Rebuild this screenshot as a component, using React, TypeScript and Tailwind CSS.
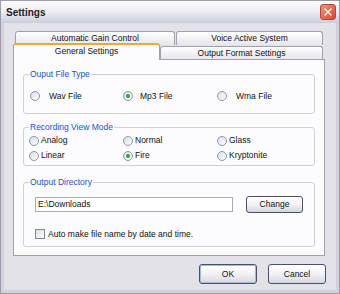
import { X } from "lucide-react";

const font = "font-['Liberation_Sans',Arial,sans-serif]";

function Radio({ label, checked, gap }: { label: string; checked?: boolean; gap: string }) {
  return (
    <label className={`flex items-center ${gap}`}>
      <span className="flex h-[10px] w-[10px] items-center justify-center rounded-full border border-[#8a96aa] bg-gradient-to-br from-[#dcdce4] to-white">
        {checked && <span className="h-[4px] w-[4px] rounded-full bg-[#2aa52a]" />}
      </span>
      <span>{label}</span>
    </label>
  );
}

function Group({ title, className, children }: { title: string; className: string; children: React.ReactNode }) {
  return (
    <div className={`relative mx-[9px] rounded-[3px] border border-[#cfd0d8] ${className}`}>
      <span className="absolute -top-[6px] left-[5px] bg-[#fcfcfe] px-[1px] leading-[10px] text-[#2450c8]">
        {title}
      </span>
      {children}
    </div>
  );
}

function Button({ children, primary, className }: { children: React.ReactNode; primary?: boolean; className: string }) {
  return (
    <button
      className={`rounded-[3px] border border-[#4a5068] bg-gradient-to-b from-white via-[#f2f2f6] to-[#d6d6e0] text-[#111] ${
        primary ? "shadow-[inset_0_0_0_1px_#aab8d8]" : ""
      } ${className}`}
    >
      {children}
    </button>
  );
}

export default function App() {
  return (
    <div className={`flex h-[294px] w-[340px] flex-col border border-[#9a9aa8] bg-[#d2d2dc] text-[8.5px] text-[#111] ${font}`}>
      {/* title bar */}
      <div className="flex h-[22px] items-center justify-between bg-gradient-to-b from-[#fdfdfe] via-[#ececf2] to-[#cdcdda] pl-[5px] pr-[3px]">
        <span className="text-[10px] font-bold text-[#222]">Settings</span>
        <span className="flex h-[16px] w-[16px] items-center justify-center rounded-[3px] border border-[#b04a3a] bg-gradient-to-br from-[#f39080] to-[#d8452e]">
          <X className="h-[12px] w-[12px] text-white" strokeWidth={2.5} />
        </span>
      </div>

      <div className="mx-[3px] mb-[3px] flex flex-1 flex-col bg-[#e3e2e8]">
        {/* tabs */}
        <div className="mt-[8px] flex h-[14px] items-stretch pl-[11px]">
          <div className="flex w-[160px] items-center justify-center rounded-t-[3px] border border-b-0 border-[#a0a0ae] bg-gradient-to-b from-white to-[#e6e6ec]">
            Automatic Gain Control
          </div>
          <div className="ml-[1px] flex w-[147px] items-center justify-center rounded-t-[3px] border border-b-0 border-[#a0a0ae] bg-gradient-to-b from-white to-[#e6e6ec]">
            Voice Active System
          </div>
        </div>
        <div className="flex h-[14px] items-start pl-[9px]">
          <div className="relative z-10 -mt-[2px] flex h-[17px] w-[147px] items-center justify-center rounded-t-[3px] border-x border-t-2 border-[#a0a0ae] border-t-[#f0a830] bg-[#fcfcfe] pb-[2px]">
            General Settings
          </div>
          <div className="mt-[1px] flex h-[13px] w-[163px] items-center justify-center rounded-t-[3px] border border-b-0 border-[#a0a0ae] bg-gradient-to-b from-white to-[#e6e6ec]">
            Output Format Settings
          </div>
        </div>

        {/* panel */}
        <div className="ml-[9px] flex h-[197px] w-[312px] flex-col border border-[#a0a0ae] bg-[#fcfcfe]">
          <Group title="Ouput File Type" className="mt-[14px] h-[40px] pl-[6px] pt-[15px]">
            <div className="flex">
              <div className="w-[93px]"><Radio label="Wav File" gap="gap-[9px]" /></div>
              <div className="w-[94px]"><Radio label="Mp3 File" checked gap="gap-[7px]" /></div>
              <Radio label="Wma File" gap="gap-[9px]" />
            </div>
          </Group>

          <Group title="Recording View Mode" className="mt-[13px] h-[39px] pl-[5px] pt-[5px]">
            <div className="grid grid-cols-[94px_94px_1fr]">
              <div className="flex h-[15px] items-center"><Radio label="Analog" gap="gap-[2px]" /></div>
              <div className="flex h-[15px] items-center"><Radio label="Normal" gap="gap-[2px]" /></div>
              <div className="flex h-[15px] items-center"><Radio label="Glass" gap="gap-[2px]" /></div>
              <div className="flex h-[15px] items-center"><Radio label="Linear" gap="gap-[2px]" /></div>
              <div className="flex h-[15px] items-center"><Radio label="Fire" checked gap="gap-[2px]" /></div>
              <div className="flex h-[15px] items-center"><Radio label="Kryptonite" gap="gap-[2px]" /></div>
            </div>
          </Group>

          <Group title="Output Directory" className="mt-[16px] h-[65px] pl-[11px] pt-[13px]">
            <div className="flex items-center">
              <div className="flex h-[15px] w-[198px] items-center border border-[#a5acb8] bg-white pl-[2px]">E:\Downloads</div>
              <Button className="ml-[13px] h-[17px] w-[57px]">Change</Button>
            </div>
            <label className="mt-[15px] flex items-center gap-[3px]">
              <span className="h-[10px] w-[10px] border border-[#7f8a9c] bg-gradient-to-br from-[#dcdce4] to-white" />
              <span>Auto make file name by date and time.</span>
            </label>
          </Group>
        </div>

        {/* footer */}
        <div className="mt-[8px] flex justify-end gap-[11px] pr-[10px]">
          <Button primary className="h-[20px] w-[58px]">OK</Button>
          <Button className="h-[20px] w-[58px]">Cancel</Button>
        </div>
      </div>
    </div>
  );
}
